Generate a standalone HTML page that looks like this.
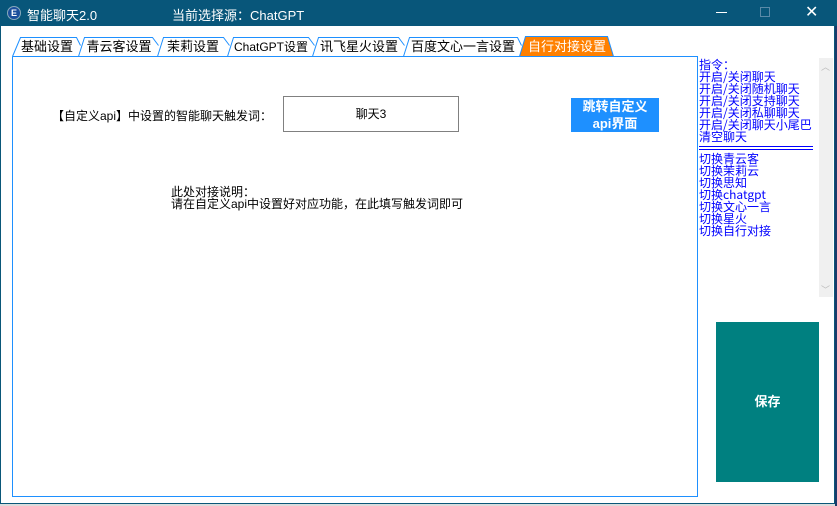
<!DOCTYPE html>
<html><head><meta charset="utf-8"><style>
*{margin:0;padding:0;box-sizing:border-box}
body{width:837px;height:506px;overflow:hidden;background:#dcdcdc;font-family:"Liberation Sans","Noto Sans CJK SC",sans-serif;position:relative}
.a{position:absolute}
#win{left:0;top:0;width:835px;height:504px;background:#fff;border:1px solid #0a5779}
#tb{left:0;top:0;width:837px;height:26px;background:#08567a;color:#fff;font-size:13px}
.tab{position:absolute;top:37px;height:20px;font-size:13px;line-height:20px;text-align:center;color:#000}
.r{font-size:12px;line-height:12px;color:#0000ff;left:699px;white-space:nowrap;font-family:"WenQuanYi Zen Hei","Noto Sans CJK SC",sans-serif}
</style></head><body>
<div class="a" style="left:835px;top:0;width:2px;height:506px;background:#1a3a6a"></div>
<div class="a" id="win"></div>
<div class="a" id="tb">
 <div class="a" style="left:7px;top:6px;width:14px;height:14px;border-radius:7px;background:#1b4f9c;border:1px solid #8ab;color:#fff;font-size:9px;line-height:12px;text-align:center;font-weight:bold">E</div>
 <div class="a" style="left:27px;top:5px">智能聊天2.0</div>
 <div class="a" style="left:172px;top:5px">当前选择源：ChatGPT</div>
 <div class="a" style="left:716px;top:12px;width:11px;height:1px;background:#fff"></div>
 <div class="a" style="left:760px;top:7px;width:10px;height:10px;border:1px solid #5a8aa8"></div>
 <div class="a" style="left:805px;top:1px;font-size:16px;line-height:24px">✕</div>
</div>
<svg class="a" style="left:0;top:0" width="837" height="506">
 <g fill="none" stroke="#1e90ff" stroke-width="1">
  <path d="M12.5 56.5 L20.5 37.5 L76.5 37.5 L80.5 45.5"/>
  <path d="M78.5 56.5 L84.5 37.5 L152.5 37.5 L158.5 45.5"/>
  <path d="M157.5 56.5 L163.5 37.5 L223.5 37.5 L229.5 45.5"/>
  <path d="M227.5 56.5 L233.5 37.5 L308.5 37.5 L314.5 45.5"/>
  <path d="M312.5 56.5 L318.5 37.5 L398.5 37.5 L404.5 45.5"/>
  <path d="M403.5 56.5 L409.5 37.5 L517.5 37.5 L521.5 45.5"/>
  <path d="M519.5 56.5 L525.5 36.5 L607.5 36.5 L613.5 56.5 Z" fill="#ff8000"/>
  <path d="M12.5 56.5 L519.5 56.5"/>
  <path d="M613.5 56.5 L697.5 56.5 L697.5 496.5 L12.5 496.5 L12.5 56.5"/>
 </g>
</svg>
<div class="tab" style="left:18px;width:58px">基础设置</div>
<div class="tab" style="left:84px;width:70px">青云客设置</div>
<div class="tab" style="left:163px;width:60px">茉莉设置</div>
<div class="tab" style="left:233px;width:76px;font-size:12px">ChatGPT设置</div>
<div class="tab" style="left:318px;width:82px">讯飞星火设置</div>
<div class="tab" style="left:409px;width:108px">百度文心一言设置</div>
<div class="tab" style="left:525px;width:84px;color:#fff">自行对接设置</div>

<div class="a" style="left:52px;top:107px;font-size:12px">【自定义api】中设置的智能聊天触发词：</div>
<div class="a" style="left:283px;top:96px;width:176px;height:36px;border:1px solid #808080;font-size:12px;line-height:34px;text-align:center">聊天3</div>
<div class="a" style="left:571px;top:98px;width:88px;height:34px;background:#1e90ff;color:#fff;font-weight:bold;font-size:13px;line-height:17px;text-align:center">跳转自定义<br>api界面</div>
<div class="a" style="left:171px;top:186px;font-size:12px;line-height:12px">此处对接说明：<br>请在自定义api中设置好对应功能，在此填写触发词即可</div>

<div class="a r" style="top:59px">指令：<br>开启/关闭聊天<br>开启/关闭随机聊天<br>开启/关闭支持聊天<br>开启/关闭私聊聊天<br>开启/关闭聊天小尾巴<br>清空聊天</div>
<div class="a" style="left:699px;top:146px;width:114px;height:4px;border-top:1px solid #0000ff;border-bottom:1px solid #0000ff"></div>
<div class="a r" style="top:153px">切换青云客<br>切换茉莉云<br>切换思知<br>切换chatgpt<br>切换文心一言<br>切换星火<br>切换自行对接</div>
<div class="a" style="left:819px;top:58px;width:14px;height:239px;background:#f0f0f0"></div>
<div class="a" style="left:821px;top:60px;font-size:9px;color:#bbb">︿</div>
<div class="a" style="left:821px;top:283px;font-size:9px;color:#bbb">﹀</div>
<div class="a" style="left:716px;top:322px;width:103px;height:160px;background:#008080;color:#fff;font-weight:bold;font-size:13px;line-height:160px;text-align:center">保存</div>
</body></html>
